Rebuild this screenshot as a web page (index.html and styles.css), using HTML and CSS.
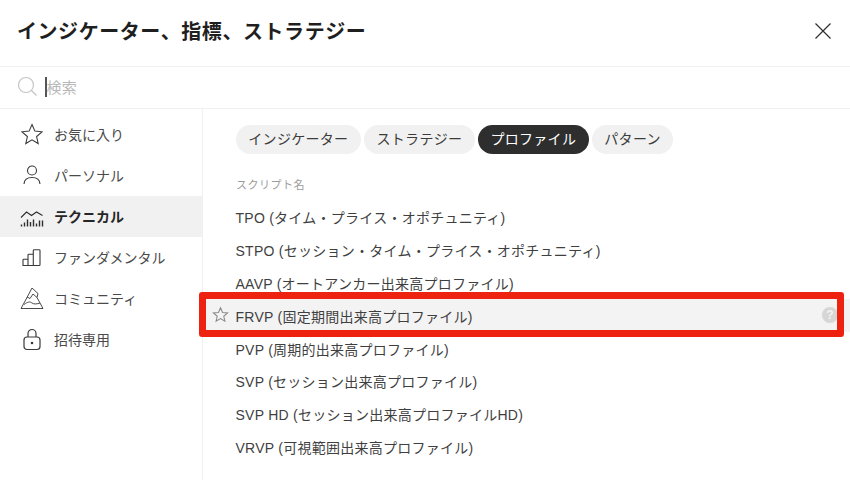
FILE: index.html
```html
<!DOCTYPE html>
<html lang="ja">
<head>
<meta charset="utf-8">
<title>インジケーター、指標、ストラテジー</title>
<link rel="stylesheet" href="styles.css">
</head>
<body>
<div class="dialog">
  <header class="header">
    <h1 class="title">インジケーター、指標、ストラテジー</h1>
    <svg class="close" width="18" height="18" viewBox="0 0 18 18"><path d="M1.500 1.500l15 15M16.500 1.500l-15 15" stroke="#2e2e2e" stroke-width="1.200" fill="none"/></svg>
  </header>
  <div class="search">
    <svg class="search-icon" width="22" height="22" viewBox="0 0 22 22"><circle cx="9" cy="9" r="7.500" stroke="#c4c4c4" stroke-width="1.200" fill="none"/><path d="M14.500 14.500l5 5" stroke="#c4c4c4" stroke-width="1.200"/></svg>
    <span class="caret"></span>
    <span class="placeholder">検索</span>
  </div>
  <div class="body">
    <nav class="side">
      <div class="side-item">
        <svg class="side-icon" width="24" height="24" viewBox="0 0 24 24"><path d="M12 2.500l2.900 6.600 7.100.7-5.400 4.700 1.600 7-6.200-3.700-6.200 3.700 1.600-7L2 9.800l7.100-.7z" fill="none" stroke="#3a3a3a" stroke-width="1.100"/></svg>
        <span>お気に入り</span>
      </div>
      <div class="side-item">
        <svg class="side-icon" width="24" height="24" viewBox="0 0 24 24"><circle cx="12" cy="7.500" r="4.500" fill="none" stroke="#3a3a3a" stroke-width="1.100"/><path d="M4 21c.300-4.300 3.500-6.500 8-6.500s7.700 2.200 8 6.500" fill="none" stroke="#3a3a3a" stroke-width="1.100"/></svg>
        <span>パーソナル</span>
      </div>
      <div class="side-item active">
        <svg class="side-icon" width="24" height="24" viewBox="0 0 24 24"><path d="M1 13.500L6.500 8l5 3.500 5-3.500 6 3.500" fill="none" stroke="#2e2e2e" stroke-width="1.100"/><path d="M1.500 22.500v-2M4.500 22.500v-4M7.500 22.500v-7M10.500 22.500v-4.500M13.500 22.500v-7M16.500 22.500v-3M19.500 22.500v-6M22.500 22.500v-6" stroke="#2e2e2e" stroke-width="1.400"/></svg>
        <span>テクニカル</span>
      </div>
      <div class="side-item">
        <svg class="side-icon" width="24" height="24" viewBox="0 0 24 24"><path d="M3 20.500V15a.8.8 0 0 1 .8-.8H8v6.300zM8 20.500V10a.8.8 0 0 1 .8-.8h3.700a.8.8 0 0 1 .8.8v10.500zM13.300 20.500V5.500a.8.8 0 0 1 .8-.8h5.100a.8.8 0 0 1 .8.8V19.700a.8.8 0 0 1-.8.8H3.800a.8.8 0 0 1-.8-.8" fill="none" stroke="#3a3a3a" stroke-width="1.100"/></svg>
        <span>ファンダメンタル</span>
      </div>
      <div class="side-item">
        <svg class="side-icon" width="24" height="24" viewBox="0 0 24 24"><path d="M1 22.500h22L17 11.500M7 11.500L1 22.500M7 11.500L12 2l6 5.500-1 4-4-3.500-3 4.500-3-1.500zM4 18.500c4-3 6-3 8-1.500s5 1 8 0" fill="none" stroke="#4a4a4a" stroke-width="1" stroke-linejoin="round"/></svg>
        <span>コミュニティ</span>
      </div>
      <div class="side-item">
        <svg class="side-icon" width="24" height="24" viewBox="0 0 24 24"><rect x="4" y="10" width="16" height="12.500" rx="3" fill="none" stroke="#3a3a3a" stroke-width="1.200"/><path d="M8 10V6.500a4 4 0 0 1 8 0V10" fill="none" stroke="#3a3a3a" stroke-width="1.200"/><circle cx="12" cy="16" r="1.300" fill="#3a3a3a"/></svg>
        <span>招待専用</span>
      </div>
    </nav>
    <main class="main">
      <div class="pills">
        <span class="pill">インジケーター</span>
        <span class="pill">ストラテジー</span>
        <span class="pill selected">プロファイル</span>
        <span class="pill">パターン</span>
      </div>
      <div class="label">スクリプト名</div>
      <ul class="list">
        <li class="row">TPO (タイム・プライス・オポチュニティ)</li>
        <li class="row">STPO (セッション・タイム・プライス・オポチュニティ)</li>
        <li class="row">AAVP (オートアンカー出来高プロファイル)</li>
        <li class="row hover">
          <svg class="row-star" width="17" height="17" viewBox="0 0 24 24"><path d="M12 2.500l2.900 6.600 7.100.7-5.400 4.700 1.600 7-6.200-3.700-6.200 3.700 1.600-7L2 9.800l7.100-.7z" fill="none" stroke="#8a8a8a" stroke-width="1.500"/></svg>
          <span>FRVP (固定期間出来高プロファイル)</span>
          <span class="help">?</span>
          <span class="highlight"></span>
        </li>
        <li class="row">PVP (周期的出来高プロファイル)</li>
        <li class="row">SVP (セッション出来高プロファイル)</li>
        <li class="row">SVP HD (セッション出来高プロファイルHD)</li>
        <li class="row">VRVP (可視範囲出来高プロファイル)</li>
      </ul>
    </main>
  </div>
</div>
</body>
</html>
```
FILE: styles.css
```css
* { box-sizing: border-box; }
html, body { margin: 0; padding: 0; }
body {
  width: 850px;
  height: 480px;
  overflow: hidden;
  background: #fff;
  font-family: "Liberation Sans", "Noto Sans CJK JP", sans-serif;
  color: #2e2e2e;
}
.dialog { display: flex; flex-direction: column; height: 480px; }
.header {
  height: 67px;
  flex: none;
  display: flex;
  align-items: center;
  justify-content: space-between;
  padding: 0 18px 5px 17px;
  border-bottom: 1px solid #f0f0f0;
}
.title { margin: 0; font-size: 20px; font-weight: 700; letter-spacing: .56px; color: #1f1f1f; }
.close { display: block; }
.search {
  height: 42px;
  flex: none;
  display: flex;
  align-items: center;
  padding: 0 0 2px 17px;
  border-bottom: 1px solid #f0f0f0;
}
.search-icon { flex: none; margin-right: 6px; }
.caret { width: 1.500px; height: 20px; background: #555; flex: none; }
.placeholder { font-size: 15px; letter-spacing: .3px; color: #b8b8b8; }
.body { flex: 1; display: flex; min-height: 0; }
.side { width: 203px; flex: none; border-right: 1px solid #f0f0f0; padding-top: 5px; }
.side-item {
  height: 41px;
  display: flex;
  align-items: center;
  padding: 0 0 2px 20px;
  gap: 10px;
  font-size: 14px;
  color: #4a4a4a;
}
.side-icon { flex: none; }
.side-item.active { background: #f1f1f1; font-weight: 700; color: #262626; }
.main { flex: 1; padding-top: 16px; min-width: 0; }
.pills { display: flex; gap: 3.500px; padding-left: 33px; }
.pill {
  height: 29px;
  padding: 0 12.300px;
  border-radius: 15px;
  background: #f1f1f1;
  font-size: 14px;
  letter-spacing: .3px;
  line-height: 28px;
  color: #3c3c3c;
  white-space: nowrap;
}
.pill.selected { background: #2e2e2e; color: #fff; }
.label { margin: 23px 0 0 33px; font-size: 11px; line-height: 16px; color: #9a9a9a; letter-spacing: .5px; }
.list { list-style: none; margin: 8px 0 0; padding: 0; }
.row {
  position: relative;
  height: 32.800px;
  display: flex;
  align-items: center;
  padding-left: 32.500px;
  font-size: 14px;
  letter-spacing: .25px;
  color: #3f3f3f;
  white-space: nowrap;
}
.row.hover { background: #f3f3f3; }
.row-star { position: absolute; left: 9px; top: 7px; }
.help {
  position: absolute;
  right: 12px;
  top: 8px;
  width: 16px;
  height: 16px;
  border-radius: 50%;
  background: #d6d6d6;
  color: #f3f3f3;
  font-size: 12px;
  font-weight: 700;
  line-height: 16px;
  text-align: center;
}
.highlight {
  position: absolute;
  left: -4px;
  right: 6px;
  top: -7px;
  bottom: -5px;
  border: 7px solid #ee2211;
  border-radius: 3px;
}
```
